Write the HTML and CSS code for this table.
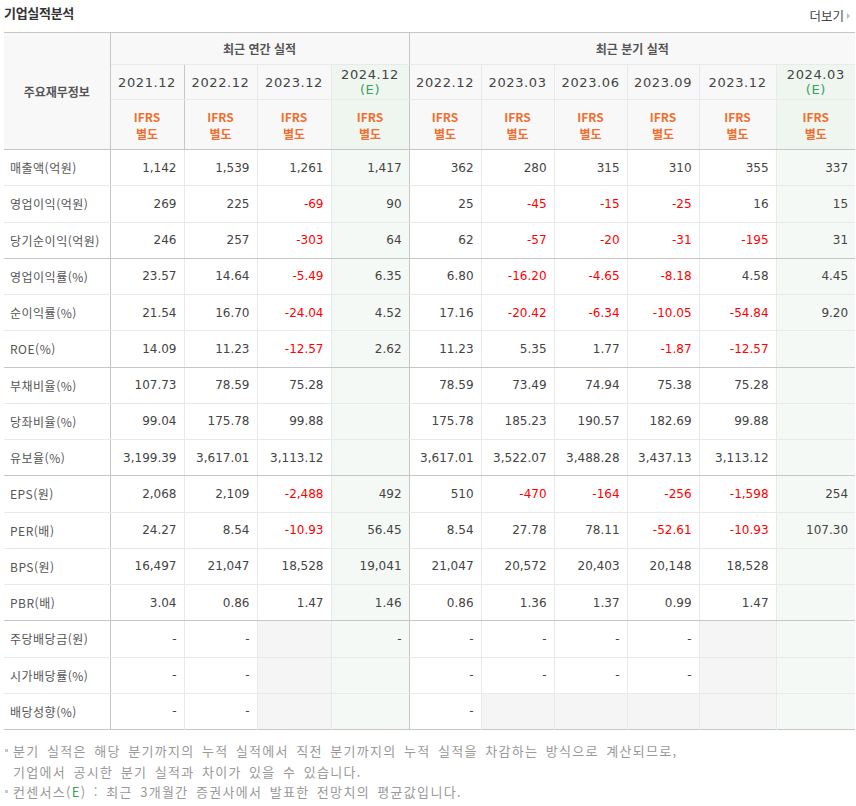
FILE: index.html
```html
<!DOCTYPE html>
<html lang="ko">
<head>
<meta charset="utf-8">
<link rel="stylesheet" href="styles.css">
</head>
<body>
<div class="wrap">
  <div class="top">
    <h2 class="title">기업실적분석</h2>
    <a class="more">더보기<span class="arr"></span></a>
  </div>
  <table class="perf">
    <colgroup>
      <col style="width:106px"><col style="width:74px"><col style="width:73px"><col style="width:74px"><col style="width:78px">
      <col style="width:72px"><col style="width:73px"><col style="width:73px"><col style="width:72px"><col style="width:77px"><col style="width:79px">
    </colgroup>
    <thead>
      <tr class="h1">
        <th rowspan="3" class="lab">주요재무정보</th>
        <th colspan="4" class="grp sep">최근 연간 실적</th>
        <th colspan="6" class="grp">최근 분기 실적</th>
      </tr>
      <tr class="h2">
        <th class="dt">2021.12</th><th class="dt">2022.12</th><th class="dt">2023.12</th><th class="dt e sep">2024.12<br><em>(E)</em></th>
        <th class="dt">2022.12</th><th class="dt">2023.03</th><th class="dt">2023.06</th><th class="dt">2023.09</th><th class="dt">2023.12</th><th class="dt e">2024.03<br><em>(E)</em></th>
      </tr>
      <tr class="h3">
        <th class="ifrs">IFRS<br>별도</th><th class="ifrs">IFRS<br>별도</th><th class="ifrs">IFRS<br>별도</th><th class="ifrs e sep">IFRS<br>별도</th>
        <th class="ifrs">IFRS<br>별도</th><th class="ifrs">IFRS<br>별도</th><th class="ifrs">IFRS<br>별도</th><th class="ifrs">IFRS<br>별도</th><th class="ifrs">IFRS<br>별도</th><th class="ifrs e">IFRS<br>별도</th>
      </tr>
    </thead>
    <tbody>
      <tr><th>매출액(억원)</th><td>1,142</td><td>1,539</td><td>1,261</td><td class="e sep">1,417</td><td>362</td><td>280</td><td>315</td><td>310</td><td>355</td><td class="e">337</td></tr>
      <tr><th>영업이익(억원)</th><td>269</td><td>225</td><td class="n">-69</td><td class="e sep">90</td><td>25</td><td class="n">-45</td><td class="n">-15</td><td class="n">-25</td><td>16</td><td class="e">15</td></tr>
      <tr class="last"><th>당기순이익(억원)</th><td>246</td><td>257</td><td class="n">-303</td><td class="e sep">64</td><td>62</td><td class="n">-57</td><td class="n">-20</td><td class="n">-31</td><td class="n">-195</td><td class="e">31</td></tr>
      <tr><th>영업이익률(%)</th><td>23.57</td><td>14.64</td><td class="n">-5.49</td><td class="e sep">6.35</td><td>6.80</td><td class="n">-16.20</td><td class="n">-4.65</td><td class="n">-8.18</td><td>4.58</td><td class="e">4.45</td></tr>
      <tr><th>순이익률(%)</th><td>21.54</td><td>16.70</td><td class="n">-24.04</td><td class="e sep">4.52</td><td>17.16</td><td class="n">-20.42</td><td class="n">-6.34</td><td class="n">-10.05</td><td class="n">-54.84</td><td class="e">9.20</td></tr>
      <tr class="last"><th>ROE(%)</th><td>14.09</td><td>11.23</td><td class="n">-12.57</td><td class="e sep">2.62</td><td>11.23</td><td>5.35</td><td>1.77</td><td class="n">-1.87</td><td class="n">-12.57</td><td class="e"></td></tr>
      <tr><th>부채비율(%)</th><td>107.73</td><td>78.59</td><td>75.28</td><td class="e sep"></td><td>78.59</td><td>73.49</td><td>74.94</td><td>75.38</td><td>75.28</td><td class="e"></td></tr>
      <tr><th>당좌비율(%)</th><td>99.04</td><td>175.78</td><td>99.88</td><td class="e sep"></td><td>175.78</td><td>185.23</td><td>190.57</td><td>182.69</td><td>99.88</td><td class="e"></td></tr>
      <tr class="last"><th>유보율(%)</th><td>3,199.39</td><td>3,617.01</td><td>3,113.12</td><td class="e sep"></td><td>3,617.01</td><td>3,522.07</td><td>3,488.28</td><td>3,437.13</td><td>3,113.12</td><td class="e"></td></tr>
      <tr><th>EPS(원)</th><td>2,068</td><td>2,109</td><td class="n">-2,488</td><td class="e sep">492</td><td>510</td><td class="n">-470</td><td class="n">-164</td><td class="n">-256</td><td class="n">-1,598</td><td class="e">254</td></tr>
      <tr><th>PER(배)</th><td>24.27</td><td>8.54</td><td class="n">-10.93</td><td class="e sep">56.45</td><td>8.54</td><td>27.78</td><td>78.11</td><td class="n">-52.61</td><td class="n">-10.93</td><td class="e">107.30</td></tr>
      <tr><th>BPS(원)</th><td>16,497</td><td>21,047</td><td>18,528</td><td class="e sep">19,041</td><td>21,047</td><td>20,572</td><td>20,403</td><td>20,148</td><td>18,528</td><td class="e"></td></tr>
      <tr class="last"><th>PBR(배)</th><td>3.04</td><td>0.86</td><td>1.47</td><td class="e sep">1.46</td><td>0.86</td><td>1.36</td><td>1.37</td><td>0.99</td><td>1.47</td><td class="e"></td></tr>
      <tr><th>주당배당금(원)</th><td>-</td><td>-</td><td class="g"></td><td class="e sep">-</td><td>-</td><td>-</td><td>-</td><td>-</td><td class="g"></td><td class="e"></td></tr>
      <tr><th>시가배당률(%)</th><td>-</td><td>-</td><td class="g"></td><td class="e sep"></td><td>-</td><td>-</td><td>-</td><td>-</td><td class="g"></td><td class="e"></td></tr>
      <tr class="end"><th>배당성향(%)</th><td>-</td><td>-</td><td class="g"></td><td class="e sep"></td><td>-</td><td class="g"></td><td class="g"></td><td class="g"></td><td class="g"></td><td class="e"></td></tr>
    </tbody>
  </table>
  <ul class="notes">
    <li>분기 실적은 해당 분기까지의 누적 실적에서 직전 분기까지의 누적 실적을 차감하는 방식으로 계산되므로,<br>기업에서 공시한 분기 실적과 차이가 있을 수 있습니다.</li>
    <li>컨센서스(<span class="ge">E</span>) : 최근 3개월간 증권사에서 발표한 전망치의 평균값입니다.</li>
  </ul>
</div>
</body>
</html>
```
FILE: styles.css
```css
html, body {
  margin: 0;
  padding: 0;
  background: #fff;
}
body {
  font-family: "Noto Sans CJK KR", "DejaVu Sans", sans-serif;
  color: #333;
}
.wrap {
  width: 851px;
  margin-left: 4px;
}
.top {
  height: 32px;
  display: flex;
  justify-content: space-between;
  align-items: flex-start;
}
.title {
  margin: 0;
  padding-top: 3px;
  font-size: 13px;
  font-weight: bold;
  color: #333;
  line-height: 20px;
  letter-spacing: -0.3px;
}
.more {
  margin-top: 7px;
  font-size: 12.5px;
  line-height: 18px;
  color: #444;
  display: flex;
  align-items: center;
  margin-right: 5px;
}
.arr {
  display: inline-block;
  width: 0;
  height: 0;
  border-left: 3px solid #bbb;
  border-top: 3px solid transparent;
  border-bottom: 3px solid transparent;
  margin-left: 3px;
}
.perf {
  width: 851px;
  table-layout: fixed;
  border-collapse: collapse;
  border-top: 1px solid #c6c6c6;
  border-bottom: 1px solid #c6c6c6;
}
.perf th, .perf td {
  padding: 0;
  border: 1px solid #e9e9e9;
  border-top: 0;
}
.perf tr > :first-child { border-left: 0; border-right: 1px solid #c6c6c6; }
.perf tr > :last-child { border-right: 0; }
.perf .sep { border-right: 1px solid #c6c6c6; }
.perf thead th {
  background: #f8f8f8;
  font-weight: normal;
  text-align: center;
}
.perf thead tr.h3 th { border-bottom: 1px solid #c6c6c6; }
.perf thead th.lab {
  font-size: 12px;
  font-weight: bold;
  color: #555;
  border-bottom: 1px solid #c6c6c6;
}
.h1 { height: 32px; }
.h2 { height: 35px; }
.h3 { height: 50px; }
.perf th.grp {
  font-size: 12px;
  font-weight: bold;
  color: #555;
  border-bottom: 1px solid #e9e9e9;
}
.perf th.dt {
  font-family: "DejaVu Sans", sans-serif;
  font-size: 13px;
  letter-spacing: 0.6px;
  color: #444;
  line-height: 15px;
}
.perf th.dt em {
  font-style: normal;
  color: #3aa060;
}
.perf th.ifrs {
  font-size: 12px;
  font-weight: bold;
  color: #ee7030;
  line-height: 17px;
}
.perf thead th.e { background: #eff6f0; }
.perf tbody tr { height: 36.25px; }
.perf tbody th {
  text-align: left;
  padding-left: 6px;
  font-size: 12px;
  font-weight: normal;
  color: #555;
  letter-spacing: 0.5px;
  white-space: nowrap;
}
.perf tbody td {
  text-align: right;
  padding-right: 7px;
  font-family: "DejaVu Sans", sans-serif;
  font-size: 12px;
  color: #444;
}
.perf tbody tr > * { border-bottom: 1px solid #e9e9e9; }
.perf tbody tr.last > * { border-bottom: 1px solid #c6c6c6; }
.perf tbody tr.end > * { border-bottom: 0; }
.perf tbody td.e { background: #f4f9f5; }
.perf tbody td.g { background: #f5f5f5; }
.perf tbody td.n { color: #ff0000; }
.notes {
  list-style: none;
  margin: 11px 0 0 0;
  padding: 0;
  font-size: 13px;
  line-height: 20.5px;
  color: #999;
  letter-spacing: 1.3px;
  word-spacing: 2.5px;
}
.notes li {
  position: relative;
  padding-left: 9px;
}
.notes li::before {
  content: "";
  position: absolute;
  left: 1px;
  top: 8px;
  width: 3px;
  height: 3px;
  background: #c8c8c8;
}
.ge { color: #3aa060; }
```
